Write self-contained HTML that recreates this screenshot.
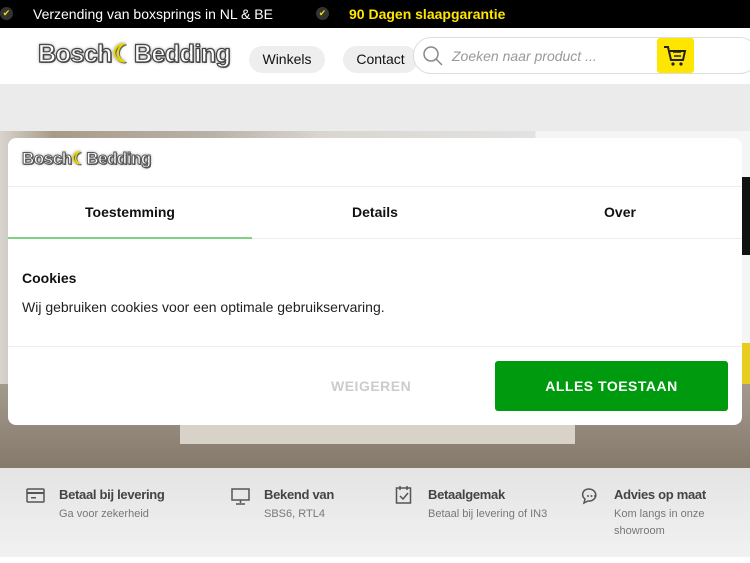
<!DOCTYPE html>
<html><head><meta charset="utf-8"><style>
*{margin:0;padding:0;box-sizing:border-box}
body{width:750px;height:563px;overflow:hidden;font-family:"Liberation Sans",sans-serif;background:#fff;position:relative}
.top{position:absolute;left:0;top:0;width:750px;height:28px;background:#000;color:#fff;font-size:14px}
.chk{position:absolute;top:7px;width:13px;height:13px;border-radius:50%;background:#333;color:#f5e000;font-size:9px;text-align:center;line-height:13px}
.hdr{position:absolute;top:28px;left:0;width:750px;height:56px;background:#fff}
.logo{position:absolute;font-weight:bold;color:#fff;letter-spacing:-0.5px;-webkit-text-stroke:1.2px #444;text-shadow:0 0 3px #777,1px 1px 0 #555}
.pill{position:absolute;top:46px;height:27px;border-radius:14px;background:#eee;font-size:14px;line-height:27px;text-align:center;color:#111}
.search{position:absolute;left:413px;top:37px;width:345px;height:37px;border:1px solid #ddd;border-radius:18px;background:#fff}
.hero{position:absolute;top:84px;left:0;width:750px;height:384px;background:#ebebeb}
.modal{position:absolute;left:8px;top:138px;width:734px;height:287px;background:#fff;border-radius:8px}
.tab{position:absolute;top:66px;font-size:14px;font-weight:bold;color:#111;text-align:center;width:244px}
.feat{position:absolute;top:468px;left:0;width:750px;height:89px;background:linear-gradient(#e4e4e4,#f1f1f1)}
.f{position:absolute;top:27px}
.f b{display:block;font-size:13px;color:#444;letter-spacing:-0.3px}
.f span{display:block;font-size:11px;color:#777;margin-top:4px;line-height:17px}
</style></head><body>
<div class="top">
<div class="chk" style="left:0">✔</div>
<div style="position:absolute;left:33px;top:6px">Verzending van boxsprings in NL &amp; BE</div>
<div class="chk" style="left:316px">✔</div>
<div style="position:absolute;left:349px;top:6px;color:#ffe600;font-weight:bold">90 Dagen slaapgarantie</div>
</div>
<div class="hdr">
<div class="logo" style="left:38px;top:11px;font-size:25px">Bosch<span style="color:#e8d800;-webkit-text-stroke:0">☾</span>Bedding</div>
</div>
<div class="pill" style="left:249px;width:76px">Winkels</div>
<div class="pill" style="left:343px;width:75px">Contact</div>
<div class="search">
<svg style="position:absolute;left:9px;top:8px" width="20" height="20" viewBox="0 0 20 20"><circle cx="8" cy="8" r="7" fill="none" stroke="#888" stroke-width="1.5"/><path d="M13 13l6 6" stroke="#888" stroke-width="1.5"/></svg>
<div style="position:absolute;left:38px;top:10px;font-size:14px;font-style:italic;color:#999">Zoeken naar product ...</div>
<div style="position:absolute;left:243px;top:0;width:37px;height:35px;background:#ffe600;border-radius:3px">
<svg width="37" height="35" viewBox="0 0 37 35"><path d="M7 9h4l3 13h12l2-9H13" fill="none" stroke="#222" stroke-width="2"/><path d="M16 14h8M17 18h7" stroke="#222" stroke-width="1.5"/><circle cx="16" cy="26" r="1.6" fill="#222"/><circle cx="24" cy="26" r="1.6" fill="#222"/></svg></div>
</div>
<div class="hero">
<div style="position:absolute;left:0;top:47px;width:535px;height:290px;background:linear-gradient(90deg,#d8d4ce,#a89a88 10%,#b9b2a8 40%,#d9d6d0 60%,#e2e2e2)"></div>
<div style="position:absolute;left:536px;top:47px;width:214px;height:290px;background:#f5f5f5"></div>
<div style="position:absolute;left:742px;top:93px;width:8px;height:78px;background:#111"></div>
<div style="position:absolute;left:742px;top:259px;width:8px;height:50px;background:#e8cc20"></div>
<div style="position:absolute;left:0;top:300px;width:750px;height:84px;background:linear-gradient(#a39a8e,#85796b)"></div>
<div style="position:absolute;left:180px;top:338px;width:395px;height:22px;background:#d8d2c8"></div>
</div>
<div class="modal">
<div class="logo" style="left:14px;top:11px;font-size:17px;-webkit-text-stroke:1px #555">Bosch<span style="color:#e8d800;-webkit-text-stroke:0">☾</span>Bedding</div>
<div style="position:absolute;left:0;top:48px;width:734px;height:1px;background:#eee"></div>
<div class="tab" style="left:0">Toestemming</div>
<div class="tab" style="left:245px">Details</div>
<div class="tab" style="left:490px">Over</div>
<div style="position:absolute;left:0;top:100px;width:734px;height:1px;background:#eee"></div>
<div style="position:absolute;left:0;top:99px;width:244px;height:2px;background:#7ed47e"></div>
<div style="position:absolute;left:14px;top:132px;font-size:14px;font-weight:bold;color:#111">Cookies</div>
<div style="position:absolute;left:14px;top:161px;font-size:14px;color:#222">Wij gebruiken cookies voor een optimale gebruikservaring.</div>
<div style="position:absolute;left:0;top:208px;width:734px;height:1px;background:#eee"></div>
<div style="position:absolute;left:323px;top:240px;font-size:14px;font-weight:bold;color:#ccc;letter-spacing:0.5px">WEIGEREN</div>
<div style="position:absolute;left:487px;top:223px;width:233px;height:50px;background:#009a0e;border-radius:3px;color:#fff;font-size:14px;font-weight:bold;text-align:center;line-height:50px;letter-spacing:0.5px">ALLES TOESTAAN</div>
</div>
<div class="feat">
<svg class="f" style="left:26px;top:20px" width="20" height="16"><rect x="1" y="1" width="17" height="13" rx="1" fill="none" stroke="#555" stroke-width="1.5"/><rect x="1" y="4" width="17" height="2" fill="#555"/><rect x="5" y="9" width="5" height="1.5" fill="#555"/></svg>
<div class="f" style="left:59px;top:19px"><b>Betaal bij levering</b><span>Ga voor zekerheid</span></div>
<svg class="f" style="left:231px;top:20px" width="20" height="17"><rect x="1" y="1" width="17" height="11" fill="none" stroke="#555" stroke-width="1.5"/><path d="M9.5 12v3M5 16h9" stroke="#555" stroke-width="1.5"/></svg>
<div class="f" style="left:264px;top:19px"><b>Bekend van</b><span>SBS6, RTL4</span></div>
<svg class="f" style="left:395px;top:17px" width="18" height="20"><rect x="1.5" y="3" width="14" height="15" fill="none" stroke="#555" stroke-width="1.5"/><path d="M5 1v4M12 1v4M5 11l3 3 5-6" fill="none" stroke="#555" stroke-width="1.5"/></svg>
<div class="f" style="left:428px;top:19px"><b>Betaalgemak</b><span>Betaal bij levering of IN3</span></div>
<svg class="f" style="left:581px;top:19px" width="20" height="18"><path d="M4 3a7 6 0 1 1 3 11l-4 2 1-4a7 6 0 0 1 0-9z" fill="none" stroke="#555" stroke-width="1.5"/><circle cx="7" cy="9" r="1" fill="#555"/><circle cx="10.5" cy="9" r="1" fill="#555"/><circle cx="14" cy="9" r="1" fill="#555"/></svg>
<div class="f" style="left:614px;top:19px"><b>Advies op maat</b><span>Kom langs in onze<br>showroom</span></div>
</div>
</body></html>
